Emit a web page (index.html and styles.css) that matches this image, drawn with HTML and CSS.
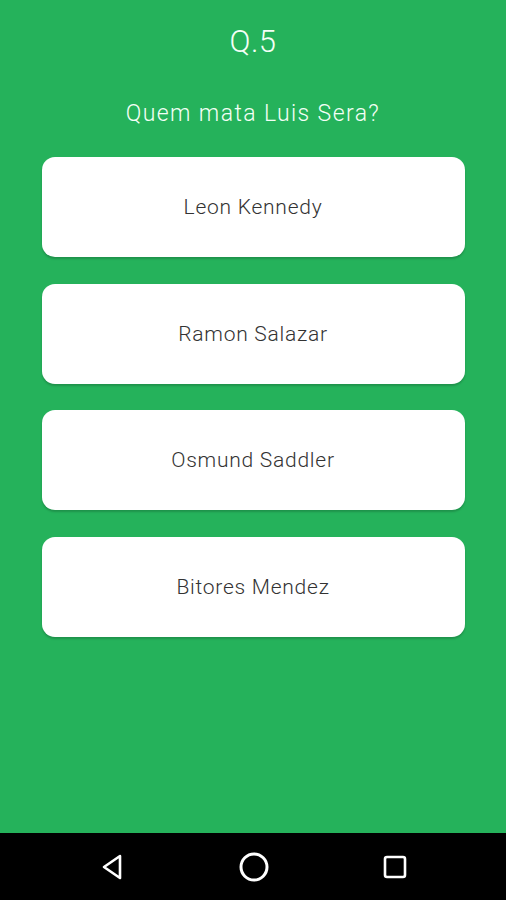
FILE: index.html
```html
<!DOCTYPE html>
<html lang="pt">
<head>
<meta charset="utf-8">
<title>Quiz</title>
<link rel="stylesheet" href="styles.css">
</head>
<body>
<div class="screen">
  <main class="content">
    <h1 class="qnum">Q.5</h1>
    <p class="question">Quem mata Luis Sera?</p>
    <div class="answers">
      <button class="answer">Leon Kennedy</button>
      <button class="answer">Ramon Salazar</button>
      <button class="answer">Osmund Saddler</button>
      <button class="answer">Bitores Mendez</button>
    </div>
  </main>
  <nav class="navbar">
    <svg class="nav-icon" width="30" height="30" viewBox="0 0 30 30"><path d="M22 4 L6 15 L22 26 Z" fill="none" stroke="#fff" stroke-width="2.6" stroke-linejoin="round"/></svg>
    <svg class="nav-icon" width="34" height="34" viewBox="0 0 34 34"><circle cx="17" cy="17" r="13" fill="none" stroke="#fff" stroke-width="3"/></svg>
    <svg class="nav-icon" width="30" height="30" viewBox="0 0 30 30"><rect x="5" y="5" width="20" height="20" rx="2" fill="none" stroke="#fff" stroke-width="2.6"/></svg>
  </nav>
</div>
</body>
</html>
```
FILE: styles.css
```css
* { box-sizing: border-box; }
html, body { margin: 0; padding: 0; }
body { width: 506px; height: 900px; overflow: hidden; font-family: "Roboto", "Liberation Sans", sans-serif; }
.screen { display: flex; flex-direction: column; height: 900px; background: #25b25b; }
.content { flex: 1; display: flex; flex-direction: column; align-items: center; }
.qnum { margin: 24px 0 0; font-size: 31px; font-weight: 300; color: #f4fff6; line-height: 36px; letter-spacing: 0.5px; }
.question { margin: 40px 0 0; font-size: 23px; font-weight: 300; color: #f4fff6; line-height: 28px; letter-spacing: 1.4px; }
.answers { margin-top: 29px; display: flex; flex-direction: column; gap: 26.5px; width: 423px; }
.answer { height: 100px; border: none; border-radius: 13px; background: #fff; font-family: inherit; font-size: 21px; font-weight: 300; color: #333; letter-spacing: 0.75px; box-shadow: 0 2px 2px rgba(0,0,0,0.18); padding: 0; }
.navbar { height: 67px; background: #000; display: flex; justify-content: space-between; align-items: center; padding: 0 96px 0 98px; }
.nav-icon { display: block; }
```
